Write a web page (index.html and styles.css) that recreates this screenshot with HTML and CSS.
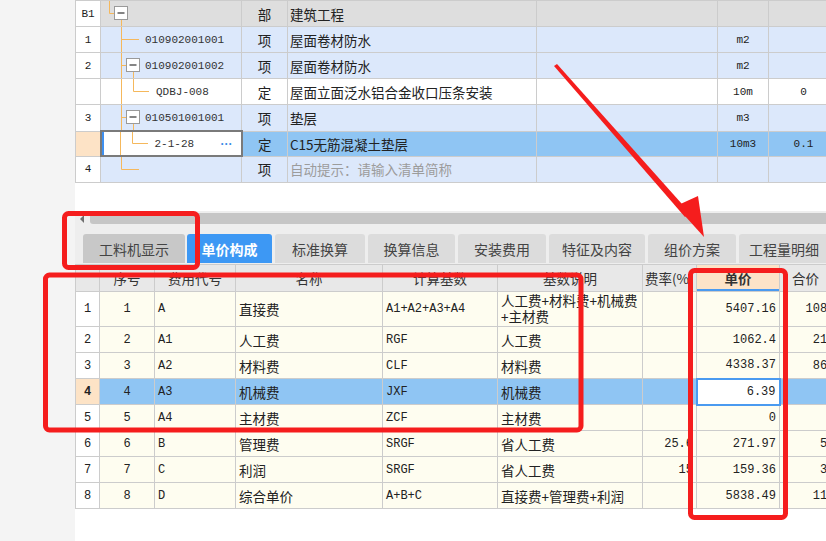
FILE: index.html
```html
<!DOCTYPE html>
<html lang="zh">
<head>
<meta charset="utf-8">
<title>单价构成</title>
<link rel="stylesheet" href="styles.css">
</head>
<body>
<div class="app">
  <aside class="side"></aside>
  <main class="main">
    <table class="grid top">
      <colgroup>
        <col class="c-no"><col class="c-code"><col class="c-type"><col class="c-name"><col class="c-blank"><col class="c-unit"><col class="c-qty">
      </colgroup>
      <tbody>
        <tr class="r-group">
          <td class="no mono">B1</td>
          <td class="code"><div class="cell-in"><svg class="tree" width="44" height="26" viewBox="0 0 44 26"><path d="M8.5 0V13.5H13" /><rect x="13.5" y="6.5" width="13" height="13" class="box"/><path d="M16.5 13H23.5" class="minus"/><path d="M20.5 20V26"/></svg></div></td>
          <td class="type">部</td>
          <td class="name">建筑工程</td>
          <td></td><td></td><td></td>
        </tr>
        <tr class="r-item">
          <td class="no mono">1</td>
          <td class="code"><div class="cell-in"><svg class="tree" width="44" height="26" viewBox="0 0 44 26"><path d="M20.5 0V26M20.5 13.5H38"/></svg><span class="mono">010902001001</span></div></td>
          <td class="type">项</td>
          <td class="name">屋面卷材防水</td>
          <td></td><td class="ctr mono">m2</td><td></td>
        </tr>
        <tr class="r-item">
          <td class="no mono">2</td>
          <td class="code"><div class="cell-in"><svg class="tree" width="44" height="26" viewBox="0 0 44 26"><path d="M20.5 0V26M20.5 13.5H25.5M32.5 20V26"/><rect x="25.5" y="6.5" width="13" height="13" class="box"/><path d="M28.5 13H35.5" class="minus"/></svg><span class="mono">010902001002</span></div></td>
          <td class="type">项</td>
          <td class="name">屋面卷材防水</td>
          <td></td><td class="ctr mono">m2</td><td></td>
        </tr>
        <tr class="r-plain">
          <td class="no mono"></td>
          <td class="code"><div class="cell-in"><svg class="tree" width="55" height="26" viewBox="0 0 55 26"><path d="M20.5 0V26M32.5 0V13.5H48"/></svg><span class="mono">QDBJ-008</span></div></td>
          <td class="type">定</td>
          <td class="name">屋面立面泛水铝合金收口压条安装</td>
          <td></td><td class="ctr mono">10m</td><td class="ctr mono">0</td>
        </tr>
        <tr class="r-item">
          <td class="no mono">3</td>
          <td class="code"><div class="cell-in"><svg class="tree" width="44" height="26" viewBox="0 0 44 26"><path d="M20.5 0V26M20.5 13.5H25.5M32.5 20V26"/><rect x="25.5" y="6.5" width="13" height="13" class="box"/><path d="M28.5 13H35.5" class="minus"/></svg><span class="mono">010501001001</span></div></td>
          <td class="type">项</td>
          <td class="name">垫层</td>
          <td></td><td class="ctr mono">m3</td><td></td>
        </tr>
        <tr class="r-sel">
          <td class="no cur"></td>
          <td class="code editing"><div class="cell-in"><svg class="tree" width="53" height="26" viewBox="0 0 53 26"><path d="M18.5 0V26M30.5 0V13.5H46"/></svg><span class="mono">2-1-28</span><span class="dots">···</span></div></td>
          <td class="type">定</td>
          <td class="name">C15无筋混凝土垫层</td>
          <td></td><td class="ctr mono">10m3</td><td class="ctr mono">0.1</td>
        </tr>
        <tr class="r-item">
          <td class="no mono">4</td>
          <td class="code"><div class="cell-in"><svg class="tree" width="44" height="26" viewBox="0 0 44 26"><path d="M20.5 0V13.5H38"/></svg></div></td>
          <td class="type">项</td>
          <td class="name hint">自动提示：请输入清单简称</td>
          <td></td><td></td><td></td>
        </tr>
      </tbody>
    </table>

    <div class="spacer"></div>

    <div class="hscroll">
      <span class="arrow"></span>
      <span class="thumb"></span>
    </div>

    <nav class="tabs">
      <span class="tab t1 dim">工料机显示</span>
      <span class="tab t2 active">单价构成</span>
      <span class="tab t3">标准换算</span>
      <span class="tab t4">换算信息</span>
      <span class="tab t5">安装费用</span>
      <span class="tab t6">特征及内容</span>
      <span class="tab t7">组价方案</span>
      <span class="tab t8">工程量明细</span>
    </nav>

    <table class="grid bottom">
      <colgroup>
        <col class="b-no"><col class="b-seq"><col class="b-code"><col class="b-name"><col class="b-base"><col class="b-desc"><col class="b-rate"><col class="b-price"><col class="b-total">
      </colgroup>
      <thead>
        <tr>
          <th class="no"></th>
          <th>序号</th>
          <th>费用代号</th>
          <th>名称</th>
          <th>计算基数</th>
          <th>基数说明</th>
          <th class="rate-h">费率(%)</th>
          <th class="price-h">单价</th>
          <th class="total-h">合价</th>
        </tr>
      </thead>
      <tbody>
        <tr class="tall">
          <td class="no mono">1</td><td class="ctr mono">1</td><td class="mono">A</td><td>直接费</td><td class="mono">A1+A2+A3+A4</td><td class="wrap">人工费+材料费+机械费<br>+主材费</td><td></td><td class="num mono">5407.16</td><td class="num mono">1081.43</td>
        </tr>
        <tr>
          <td class="no mono">2</td><td class="ctr mono">2</td><td class="mono">A1</td><td>人工费</td><td class="mono">RGF</td><td>人工费</td><td></td><td class="num mono">1062.4</td><td class="num mono">212.48</td>
        </tr>
        <tr>
          <td class="no mono">3</td><td class="ctr mono">3</td><td class="mono">A2</td><td>材料费</td><td class="mono">CLF</td><td>材料费</td><td></td><td class="num mono">4338.37</td><td class="num mono">867.67</td>
        </tr>
        <tr class="sel">
          <td class="no cur mono">4</td><td class="ctr mono">4</td><td class="mono">A3</td><td>机械费</td><td class="mono">JXF</td><td>机械费</td><td></td><td class="num mono focus">6.39</td><td class="num mono">1.28</td>
        </tr>
        <tr>
          <td class="no mono">5</td><td class="ctr mono">5</td><td class="mono">A4</td><td>主材费</td><td class="mono">ZCF</td><td>主材费</td><td></td><td class="num mono">0</td><td class="num mono">0</td>
        </tr>
        <tr>
          <td class="no mono">6</td><td class="ctr mono">6</td><td class="mono">B</td><td>管理费</td><td class="mono">SRGF</td><td>省人工费</td><td class="num mono">25.6</td><td class="num mono">271.97</td><td class="num mono">54.39</td>
        </tr>
        <tr>
          <td class="no mono">7</td><td class="ctr mono">7</td><td class="mono">C</td><td>利润</td><td class="mono">SRGF</td><td>省人工费</td><td class="num mono">15</td><td class="num mono">159.36</td><td class="num mono">31.87</td>
        </tr>
        <tr>
          <td class="no mono">8</td><td class="ctr mono">8</td><td class="mono">D</td><td>综合单价</td><td class="mono">A+B+C</td><td>直接费+管理费+利润</td><td></td><td class="num mono">5838.49</td><td class="num mono">1167.7</td>
        </tr>
      </tbody>
    </table>
  </main>
</div>

<svg class="marks" width="826" height="541" viewBox="0 0 826 541" aria-hidden="true">
  <rect x="64.5" y="213.5" width="133" height="54" rx="4"/>
  <rect x="45.5" y="275" width="535.5" height="155" rx="4"/>
  <rect x="690.5" y="270.5" width="95" height="247" rx="4"/>
  <polygon class="arrow" points="554,66 557,64 690,213 685,217"/>
  <polygon class="arrow" points="676,206 698,196 704,237"/>
</svg>
</body>
</html>
```

FILE: styles.css
```css
* { box-sizing: border-box; }

html, body {
  margin: 0;
  padding: 0;
}

body {
  width: 826px;
  height: 541px;
  overflow: hidden;
  background: #f4f4f4;
  font-family: "Noto Sans CJK SC", "Noto Sans", sans-serif;
  font-size: 13.5px;
  color: #222;
  position: relative;
}

.app {
  display: flex;
  height: 541px;
}

.side {
  width: 75px;
  flex: none;
  background: #f4f4f4;
}

.main {
  flex: 1;
  min-width: 0;
  overflow: hidden;
  background: #ffffff;
  display: flex;
  flex-direction: column;
}

.mono {
  font-family: "Liberation Mono", "DejaVu Sans Mono", monospace;
  font-size: 12px;
}

/* ---------- generic grid ---------- */
.grid {
  border-collapse: collapse;
  table-layout: fixed;
  flex: none;
}

.grid td, .grid th {
  border: 1px solid #cccccc;
  padding: 0 3px;
  white-space: nowrap;
  overflow: hidden;
  line-height: 18px;
}

.grid .no {
  background: #ffffff;
  text-align: center;
  padding: 0;
}

.ctr { text-align: center; }
.num { text-align: right; }

/* ---------- top grid ---------- */
.top { width: 763px; }
.top .c-no { width: 25px; }
.top .c-code { width: 141px; }
.top .c-type { width: 46px; }
.top .c-name { width: 249px; }
.top .c-blank { width: 181px; }
.top .c-unit { width: 51px; }
.top .c-qty { width: 70px; }

.top td { height: 25px; }
.top .mono { font-size: 11px; }

.top .code {
  padding: 0;
}
.cell-in {
  display: flex;
  align-items: center;
  height: 25px;
}
.cell-in .mono { color: #333; }

.tree {
  display: block;
  flex: none;
  margin: -1px 0 0;
  overflow: visible;
}
.tree path { stroke: #f5b85c; stroke-width: 1; fill: none; }
.tree .box { fill: #ffffff; stroke: #9a9a9a; stroke-width: 1; }
.tree .minus { stroke: #333333; stroke-width: 1.2; }

.top .type { text-align: center; }
.top .name { padding-left: 2px; }
.top .hint { color: #9c9c9c; }

.r-group td { background: #dedede; }
.r-item td { background: #dce8fb; }
.r-plain td { background: #ffffff; }
.r-sel td { background: #8fc5f3; }
.top tr td.no { background: #ffffff; }
.top tr td.cur { background: #fde3c6; }

.top .r-sel td.editing {
  background: #ffffff;
  border: 2px solid #7a7a7a;
  box-shadow: inset 2px 0 0 #3d8ff0;
}
.editing .cell-in { height: 23px; }
.dots {
  color: #3a8be6;
  font-family: "Liberation Sans", sans-serif;
  font-weight: bold;
  font-size: 12px;
  margin-left: auto;
  padding-right: 8px;
  letter-spacing: 0;
}

/* ---------- middle ---------- */
.spacer {
  height: 28px;
  flex: none;
  background: #ffffff;
}

.hscroll {
  height: 15px;
  flex: none;
  background: #eeeeee;
  display: flex;
  align-items: center;
  padding: 0 0 0 5px;
  gap: 6px;
}
.hscroll .arrow {
  width: 0;
  height: 0;
  border-top: 4px solid transparent;
  border-bottom: 4px solid transparent;
  border-right: 4px solid #707070;
}
.hscroll .thumb {
  flex: 1;
  height: 11px;
  background: #c6c6c6;
  border-radius: 3px 0 0 3px;
}

.tabs {
  flex: none;
  height: 38px;
  background: #eeeeee;
  display: flex;
  align-items: flex-end;
  padding-left: 8px;
  padding-bottom: 1px;
  gap: 3px;
}
.tab {
  flex: none;
  height: 29px;
  display: flex;
  align-items: center;
  justify-content: center;
  background: #dcdcdc;
  color: #444;
  border-radius: 3px 3px 0 0;
  font-size: 14px;
}
.tab.dim { background: #c8c8c8; }
.tab.active { background: #3d98f4; color: #ffffff; font-weight: bold; }
.t1 { width: 102px; }
.t2 { width: 85px; margin-left: -1px; }
.t3 { width: 90px; }
.t4 { width: 87px; }
.t5 { width: 88px; }
.t6 { width: 96px; }
.t7 { width: 88px; }
.t8 { width: 90px; }

/* ---------- bottom grid ---------- */
.bottom { width: 784px; }
.bottom .b-no { width: 24px; }
.bottom .b-seq { width: 55px; }
.bottom .b-code { width: 81px; }
.bottom .b-name { width: 147px; }
.bottom .b-base { width: 115px; }
.bottom .b-desc { width: 145px; }
.bottom .b-rate { width: 54px; }
.bottom .b-price { width: 83px; }
.bottom .b-total { width: 80px; }

.bottom th {
  height: 27px;
  background: #e8e8e8;
  font-weight: normal;
  color: #333;
  text-align: center;
}
.bottom th.no { background: #e8e8e8; }
.bottom th.rate-h { text-align: left; padding-left: 2px; }
.bottom th.total-h { text-align: left; padding-left: 12px; }
.bottom th.price-h {
  background: #fde3c8;
  font-weight: bold;
  box-shadow: inset 0 -2px 0 #4a9af0;
}

.bottom td {
  height: 26px;
  background: #fefdf0;
}
.bottom td.no { background: #ffffff; }
.bottom tr.tall td { height: 35px; }
.bottom td.wrap {
  line-height: 16px;
  vertical-align: top;
  padding-top: 0;
}
.bottom tr.sel td { background: #8fc5f3; }
.bottom tr.sel td.cur {
  background: #fde3c6;
  font-weight: bold;
}
.bottom tr.sel td.focus {
  background: #ffffff;
  border: 2px solid #4a9af0;
}

/* ---------- annotations ---------- */
.marks {
  position: absolute;
  left: 0;
  top: 0;
  pointer-events: none;
}
.marks rect {
  fill: none;
  stroke: #f51d1d;
  stroke-width: 5;
}
.marks .arrow {
  fill: #f51d1d;
}
```
